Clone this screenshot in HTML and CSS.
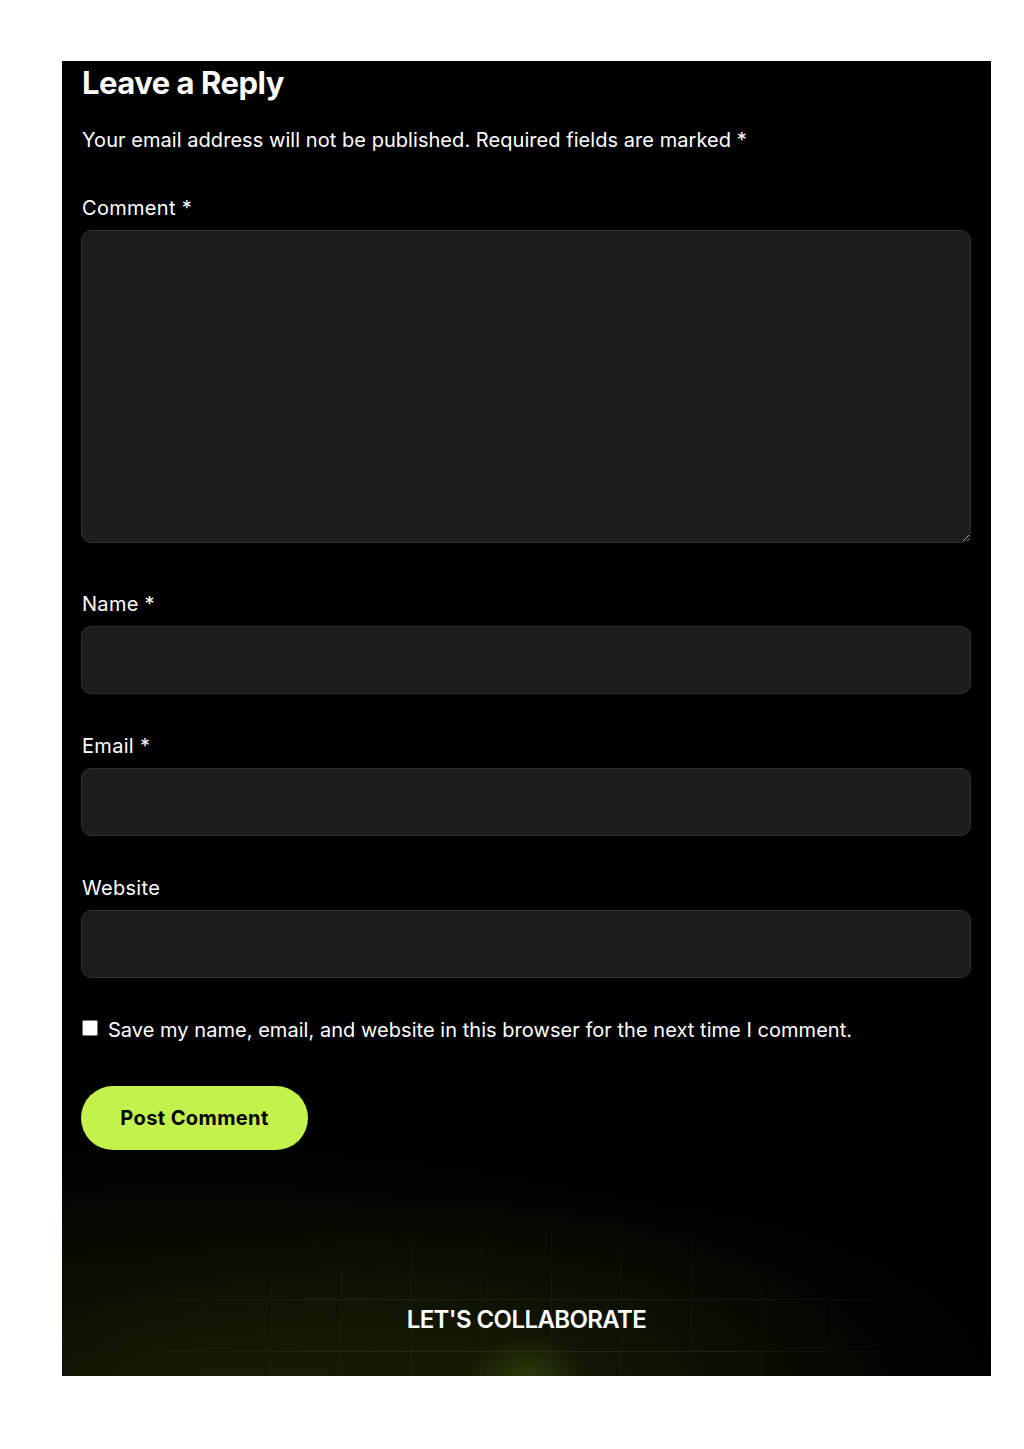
FILE: index.html
```html
<!DOCTYPE html>
<html lang="en">
<head>
    <meta charset="UTF-8">
    <meta name="viewport" content="width=device-width, initial-scale=1.0">
    <title>Leave a Reply</title>
    <link rel="stylesheet" href="styles.css">
</head>
<body>
    <div class="panel">
        <div class="respond">
            <h3 class="reply-title">Leave a Reply</h3>
            <p class="notes">Your email address will not be published. Required fields are marked *</p>
            <form class="comment-form" onsubmit="return false">
                <div class="field">
                    <label for="comment">Comment *</label>
                    <textarea id="comment" class="textarea"></textarea>
                </div>
                <div class="field">
                    <label for="author">Name *</label>
                    <input type="text" id="author" class="input">
                </div>
                <div class="field">
                    <label for="email">Email *</label>
                    <input type="email" id="email" class="input">
                </div>
                <div class="field">
                    <label for="url">Website</label>
                    <input type="url" id="url" class="input">
                </div>
                <div class="cookies">
                    <input type="checkbox" id="cookies">
                    <label for="cookies">Save my name, email, and website in this browser for the next time I comment.</label>
                </div>
                <button type="submit" class="submit">Post Comment</button>
            </form>
        </div>
        <div class="collab">
            <div class="collab-grid"></div>
            <div class="collab-glow"></div>
            <h4 class="collab-title">LET'S COLLABORATE</h4>
        </div>
    </div>
</body>
</html>
```

FILE: styles.css
```css
body {
    margin: 0;
    background: #ffffff;
    font-family: 'Inter', 'Noto Sans', sans-serif;
    color: #ffffff;
}
.panel {
    margin: 61px 33px 73px 62px;
    background-color: #000000;
    overflow: hidden;
}
.respond {
    padding: 0 20px 0 19px;
}
.reply-title {
    margin: 0 0 0 1px;
    font-size: 31px;
    line-height: 44px;
    font-weight: 700;
    letter-spacing: -0.5px;
}
.notes {
    margin: 20px 0 0 1px;
    font-size: 20px;
    line-height: 30px;
    letter-spacing: 0.05px;
    font-weight: 400;
}
.comment-form {
    margin-top: 38px;
}
.field {
    display: flex;
    flex-direction: column;
    gap: 7px;
    margin-bottom: 37px;
}
.field:first-child {
    margin-bottom: 46px;
}
.field label {
    margin-left: 1px;
    font-size: 20px;
    line-height: 30px;
    letter-spacing: 0.3px;
}
.textarea,
.input {
    box-sizing: border-box;
    width: 100%;
    background-color: #1d1d1d;
    border: 1px solid #2f2f2f;
    border-radius: 10px;
    color: #ffffff;
    font-family: inherit;
    font-size: 18px;
    padding: 12px 20px;
    outline: none;
}
.textarea {
    height: 313px;
    resize: vertical;
    display: block;
}
.input {
    height: 68px;
}
.cookies {
    display: flex;
    align-items: center;
    gap: 10px;
    height: 30px;
    margin-bottom: 41px;
}
.cookies input {
    margin: 0 0 4px 1px;
    width: 16px;
    height: 16px;
}
.cookies label {
    font-size: 20px;
    line-height: 30px;
    letter-spacing: 0.04px;
}
.submit {
    width: 227px;
    height: 64px;
    border: none;
    border-radius: 32px;
    background-color: #c2f24b;
    color: #000000;
    font-family: inherit;
    font-size: 20px;
    font-weight: 700;
    letter-spacing: 0.4px;
    cursor: pointer;
}
.collab {
    position: relative;
    height: 226px;
    padding-top: 156px;
    box-sizing: border-box;
    background:
        radial-gradient(ellipse 700px 250px at 15% 108%, rgba(48, 64, 10, 0.42), rgba(0, 0, 0, 0) 100%),
        radial-gradient(ellipse 480px 200px at 50% 105%, rgba(36, 50, 8, 0.32), rgba(0, 0, 0, 0) 100%),
        #000000;
}
.collab-grid {
    position: absolute;
    left: 0;
    right: 0;
    top: 0;
    bottom: 0;
    background-image:
        linear-gradient(to bottom, transparent 149px, rgba(255, 255, 255, 0.08) 149px, rgba(255, 255, 255, 0.08) 150px, transparent 150px, transparent 201px, rgba(255, 255, 255, 0.08) 201px, rgba(255, 255, 255, 0.08) 202px, transparent 202px),
        repeating-linear-gradient(to right, transparent 0, transparent 69px, rgba(255, 255, 255, 0.035) 69px, rgba(255, 255, 255, 0.035) 70px);
    -webkit-mask-image: radial-gradient(ellipse 420px 140px at 50% 80%, #000 40%, transparent 100%);
    mask-image: radial-gradient(ellipse 420px 140px at 50% 80%, #000 40%, transparent 100%);
}
.collab-glow {
    position: absolute;
    left: 50%;
    bottom: -40px;
    width: 120px;
    height: 80px;
    margin-left: -60px;
    background: radial-gradient(ellipse at center, rgba(80, 105, 18, 0.4), rgba(0, 0, 0, 0) 70%);
}
.collab-title {
    position: relative;
    margin: 0;
    text-align: center;
    font-size: 24px;
    line-height: 28px;
    font-weight: 600;
    letter-spacing: -0.6px;
}
```
